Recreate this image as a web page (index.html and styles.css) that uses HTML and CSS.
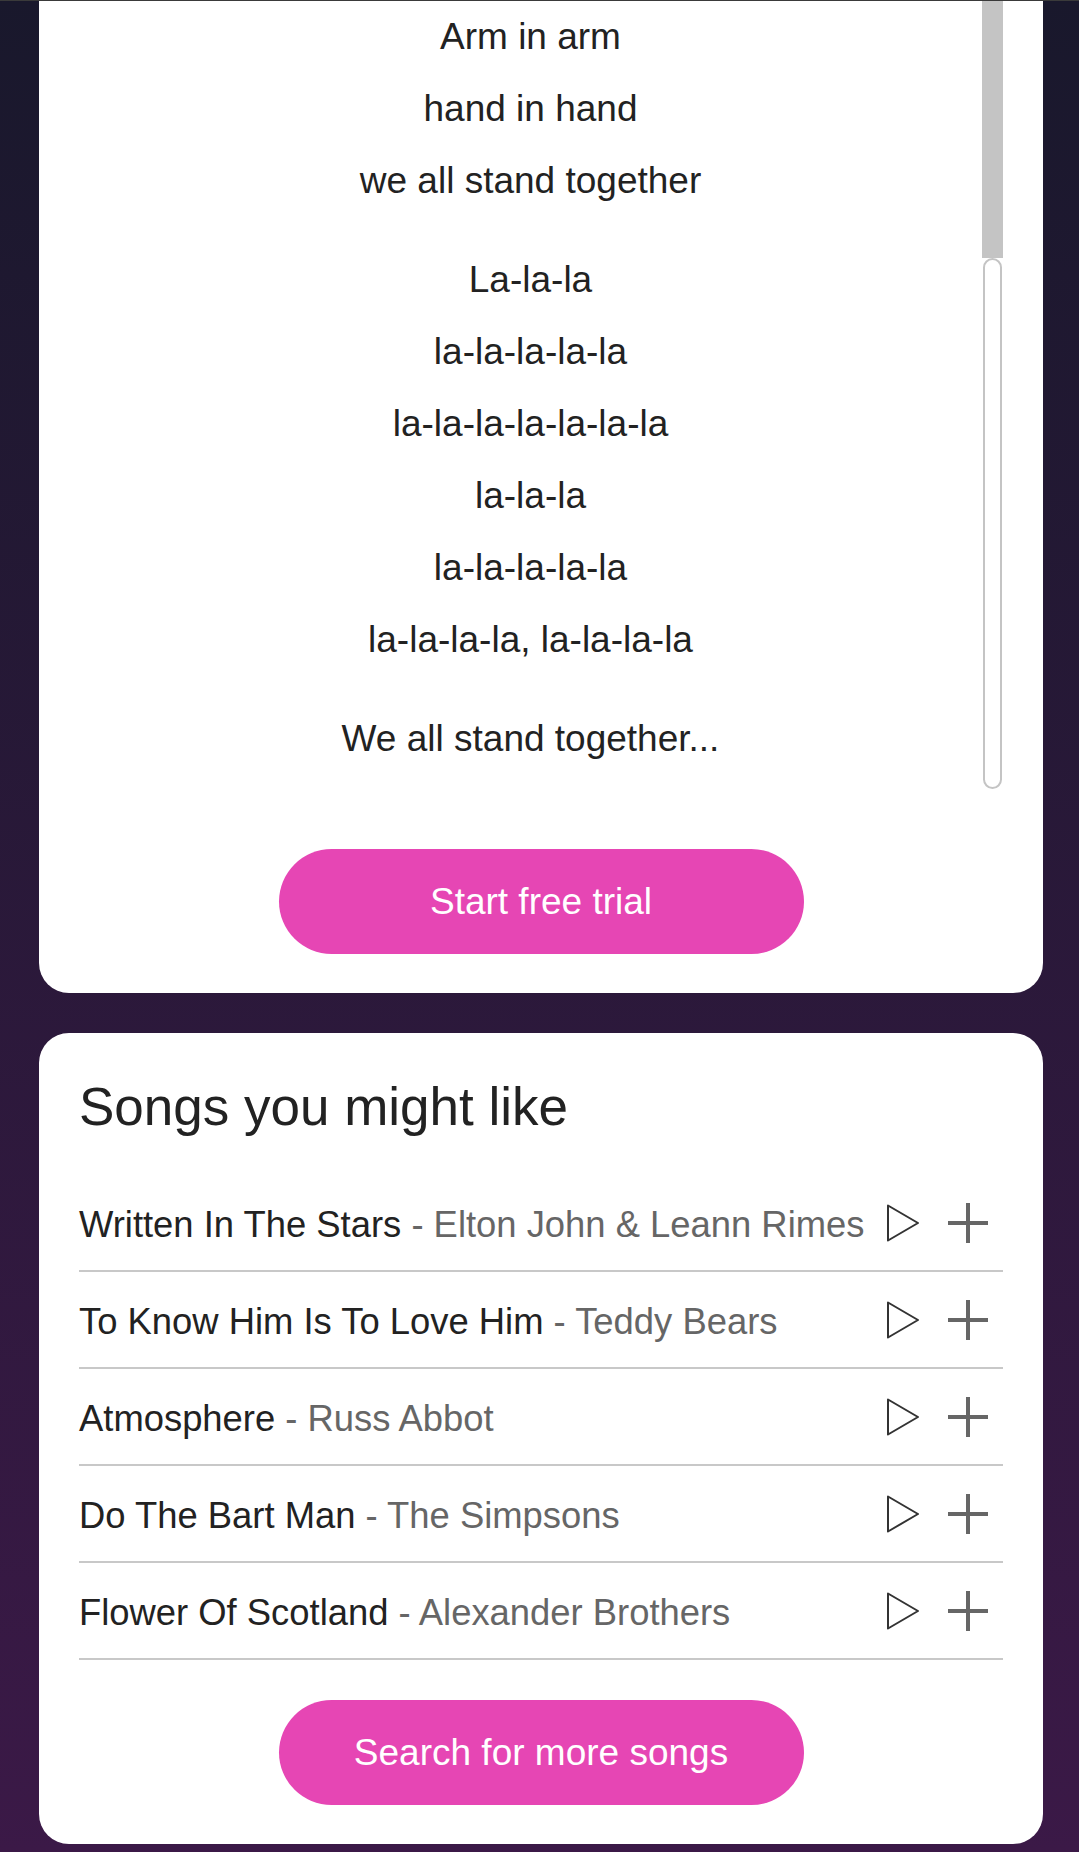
FILE: index.html
```html
<!DOCTYPE html>
<html lang="en">
<head>
    <meta charset="UTF-8">
    <meta name="viewport" content="width=device-width, initial-scale=1.0">
    <title>We All Stand Together - Lyrics</title>
    <link rel="stylesheet" href="styles.css">
</head>
<body>

<div class="card lyrics-card">
    <div class="lyrics-wrap">
        <div class="lyrics">
            <p>Arm in arm<br>hand in hand<br>we all stand together</p>
            <p>La-la-la<br>la-la-la-la-la<br>la-la-la-la-la-la-la<br>la-la-la<br>la-la-la-la-la<br>la-la-la-la, la-la-la-la</p>
            <p>We all stand together...</p>
        </div>
        <div class="scrollbar">
            <div class="scrollbar-track"></div>
            <div class="scrollbar-thumb"></div>
        </div>
    </div>
    <button class="pink-button">Start free trial</button>
</div>

<div class="card songs-card">
    <h2>Songs you might like</h2>
    <ul class="song-list">
        <li>
            <span class="song-name">Written In The Stars <span class="artist">- Elton John &amp; Leann Rimes</span></span>
            <span class="actions">
                <svg class="play" viewBox="0 0 34 40"><path d="M2 2.5 L32 20 L2 37.5 Z"/></svg>
                <svg class="plus" viewBox="0 0 40 40"><path d="M20 0 V40 M0 20 H40"/></svg>
            </span>
        </li>
        <li>
            <span class="song-name">To Know Him Is To Love Him <span class="artist">- Teddy Bears</span></span>
            <span class="actions">
                <svg class="play" viewBox="0 0 34 40"><path d="M2 2.5 L32 20 L2 37.5 Z"/></svg>
                <svg class="plus" viewBox="0 0 40 40"><path d="M20 0 V40 M0 20 H40"/></svg>
            </span>
        </li>
        <li>
            <span class="song-name">Atmosphere <span class="artist">- Russ Abbot</span></span>
            <span class="actions">
                <svg class="play" viewBox="0 0 34 40"><path d="M2 2.5 L32 20 L2 37.5 Z"/></svg>
                <svg class="plus" viewBox="0 0 40 40"><path d="M20 0 V40 M0 20 H40"/></svg>
            </span>
        </li>
        <li>
            <span class="song-name">Do The Bart Man <span class="artist">- The Simpsons</span></span>
            <span class="actions">
                <svg class="play" viewBox="0 0 34 40"><path d="M2 2.5 L32 20 L2 37.5 Z"/></svg>
                <svg class="plus" viewBox="0 0 40 40"><path d="M20 0 V40 M0 20 H40"/></svg>
            </span>
        </li>
        <li>
            <span class="song-name">Flower Of Scotland <span class="artist">- Alexander Brothers</span></span>
            <span class="actions">
                <svg class="play" viewBox="0 0 34 40"><path d="M2 2.5 L32 20 L2 37.5 Z"/></svg>
                <svg class="plus" viewBox="0 0 40 40"><path d="M20 0 V40 M0 20 H40"/></svg>
            </span>
        </li>
    </ul>
    <button class="pink-button">Search for more songs</button>
</div>

</body>
</html>
```

FILE: styles.css
```css
body {
    font-family: "Liberation Sans", Arial, sans-serif;
    margin: 0;
    padding: 0 36px 9px 39px;
    min-height: 1852px;
    box-sizing: border-box;
    background: linear-gradient(#19182c, #3b1947);
    border-top: 1px solid #3a3a3a;
    color: #222;
}

.card {
    background-color: white;
    padding: 0 40px 39px;
    display: flex;
    flex-direction: column;
    align-items: center;
}

.lyrics-card {
    border-radius: 0 0 30px 30px;
}

.songs-card {
    margin-top: 40px;
    padding-top: 44px;
    border-radius: 30px;
    align-items: stretch;
}

.lyrics-wrap {
    display: flex;
    width: 100%;
    height: 788px;
}

.lyrics {
    flex: 1;
    text-align: center;
    font-size: 37px;
    line-height: 72px;
}

.lyrics p {
    margin: 0 0 27px;
}

.scrollbar {
    width: 21px;
    display: flex;
    flex-direction: column;
}

.scrollbar-track {
    height: 257px;
    background-color: #c4c4c4;
}

.scrollbar-thumb {
    flex: 1;
    margin: 0 1px;
    border: 2px solid #c4c4c4;
    border-radius: 10px;
    background-color: white;
}

.pink-button {
    display: block;
    width: 525px;
    height: 105px;
    margin: 60px auto 0;
    border: none;
    border-radius: 53px;
    background-color: #e646b4;
    color: white;
    font-family: inherit;
    font-size: 37px;
    cursor: pointer;
}

.songs-card h2 {
    margin: 0 0 38px;
    font-size: 53px;
    line-height: 60px;
    font-weight: normal;
    color: #222;
}

.song-list {
    list-style: none;
    margin: 0;
    padding: 0;
}

.song-list li {
    display: flex;
    align-items: center;
    justify-content: space-between;
    height: 95px;
    border-bottom: 2px solid #c8c8c8;
    font-size: 36.4px;
}

.song-name {
    color: #222;
    padding-top: 4px;
    white-space: nowrap;
}

.artist {
    color: #666;
}

.actions {
    display: flex;
    align-items: center;
    gap: 28px;
    margin-right: 15px;
}

.play {
    width: 34px;
    height: 40px;
    fill: none;
    stroke: #333;
    stroke-width: 2;
    stroke-linejoin: round;
}

.plus {
    width: 40px;
    height: 40px;
    fill: none;
    stroke: #666;
    stroke-width: 4;
}

.songs-card .pink-button {
    margin-top: 40px;
}
```
